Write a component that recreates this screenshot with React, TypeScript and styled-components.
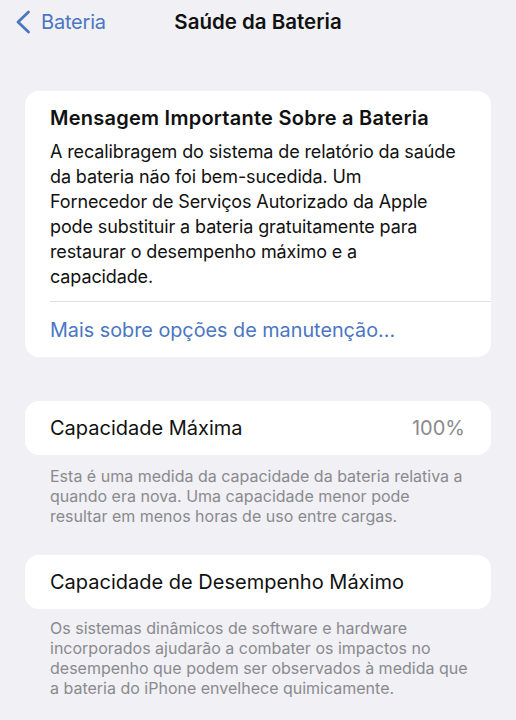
import styled, { createGlobalStyle } from 'styled-components';

const GlobalStyle = createGlobalStyle`
  html, body {
    margin: 0;
    padding: 0;
    background: #f0f0f5;
  }
  body {
    font-family: Inter, "Noto Sans", "Liberation Sans", sans-serif;
    -webkit-font-smoothing: antialiased;
  }
`;

function BackChevron() {
  return (
    <svg width="16" height="24" viewBox="0 0 16 24" fill="none">
      <path
        d="M13.5 2 L3 12 L13.5 22"
        stroke="#4a76c2"
        strokeWidth="2.8"
        strokeLinecap="round"
        strokeLinejoin="round"
      />
    </svg>
  );
}

function Lines({ lines }: { lines: string[] }) {
  return (
    <>
      {lines.map((line, i) => (
        <span key={i}>
          {line}
          {i < lines.length - 1 && <br />}
        </span>
      ))}
    </>
  );
}

function App() {
  return (
    <>
      <GlobalStyle />
      <Page>
        <NavBar>
          <BackButton>
            <BackChevron />
            <BackLabel>Bateria</BackLabel>
          </BackButton>
          <NavTitle>Saúde da Bateria</NavTitle>
        </NavBar>

        <Card $top={49}>
          <MessageBlock>
            <MessageTitle>Mensagem Importante Sobre a Bateria</MessageTitle>
            <MessageBody>
              <Lines
                lines={[
                  'A recalibragem do sistema de relatório da saúde',
                  'da bateria não foi bem-sucedida. Um',
                  'Fornecedor de Serviços Autorizado da Apple',
                  'pode substituir a bateria gratuitamente para',
                  'restaurar o desempenho máximo e a',
                  'capacidade.',
                ]}
              />
            </MessageBody>
          </MessageBlock>
          <Separator />
          <LinkRow>Mais sobre opções de manutenção...</LinkRow>
        </Card>

        <Card $top={44}>
          <CellRow>
            <CellLabel>Capacidade Máxima</CellLabel>
            <CellValue>100%</CellValue>
          </CellRow>
        </Card>
        <Footnote>
          <Lines
            lines={[
              'Esta é uma medida da capacidade da bateria relativa a',
              'quando era nova. Uma capacidade menor pode',
              'resultar em menos horas de uso entre cargas.',
            ]}
          />
        </Footnote>

        <Card $top={29}>
          <CellRow>
            <CellLabel>Capacidade de Desempenho Máximo</CellLabel>
          </CellRow>
        </Card>
        <Footnote $top={9}>
          <Lines
            lines={[
              'Os sistemas dinâmicos de software e hardware',
              'incorporados ajudarão a combater os impactos no',
              'desempenho que podem ser observados à medida que',
              'a bateria do iPhone envelhece quimicamente.',
            ]}
          />
        </Footnote>
      </Page>
    </>
  );
}

export default App;

const Page = styled.div`
  width: 516px;
  min-height: 720px;
  background: #f0f0f5;
  display: flex;
  flex-direction: column;
  overflow: hidden;
`;

const NavBar = styled.div`
  position: relative;
  height: 42px;
  display: flex;
  align-items: center;
  justify-content: center;
`;

const BackButton = styled.div`
  position: absolute;
  left: 15px;
  top: 10px;
  display: flex;
  align-items: center;
  gap: 10px;
`;

const BackLabel = styled.span`
  color: #4a76c2;
  font-size: 20px;
  letter-spacing: -0.2px;
`;

const NavTitle = styled.h1`
  margin: 0;
  color: #111;
  font-size: 20.5px;
  font-weight: 600;
  letter-spacing: 0;
`;

const Card = styled.div<{ $top: number }>`
  margin: ${({ $top }) => $top}px 25px 0;
  background: #ffffff;
  border-radius: 14px;
  display: flex;
  flex-direction: column;
`;

const MessageBlock = styled.div`
  padding: 15px 20px 12px 25px;
  display: flex;
  flex-direction: column;
  gap: 8px;
`;

const MessageTitle = styled.h2`
  margin: 0;
  color: #111;
  font-size: 20px;
  font-weight: 600;
  line-height: 25px;
  letter-spacing: 0.25px;
`;

const MessageBody = styled.p`
  margin: 0;
  color: #111;
  font-size: 18px;
  line-height: 25px;
  letter-spacing: -0.12px;
  white-space: nowrap;
`;

const Separator = styled.div`
  height: 1px;
  margin-left: 25px;
  background: #dedee2;
`;

const LinkRow = styled.div`
  padding: 16px 25px 15px;
  color: #4a76c2;
  font-size: 19.8px;
  line-height: 24px;
  letter-spacing: 0;
`;

const CellRow = styled.div`
  height: 54px;
  padding: 0 26px 0 25px;
  display: flex;
  align-items: center;
  justify-content: space-between;
`;

const CellLabel = styled.span`
  color: #111;
  font-size: 20px;
  letter-spacing: 0;
`;

const CellValue = styled.span`
  color: #8a8a8e;
  font-size: 20px;
  letter-spacing: 0;
`;

const Footnote = styled.p<{ $top?: number }>`
  margin: ${({ $top = 11 }) => $top}px 25px 0;
  padding: 0 0 0 25px;
  color: #8a8a8e;
  font-size: 16px;
  line-height: 20px;
  letter-spacing: 0;
  white-space: nowrap;
`;
